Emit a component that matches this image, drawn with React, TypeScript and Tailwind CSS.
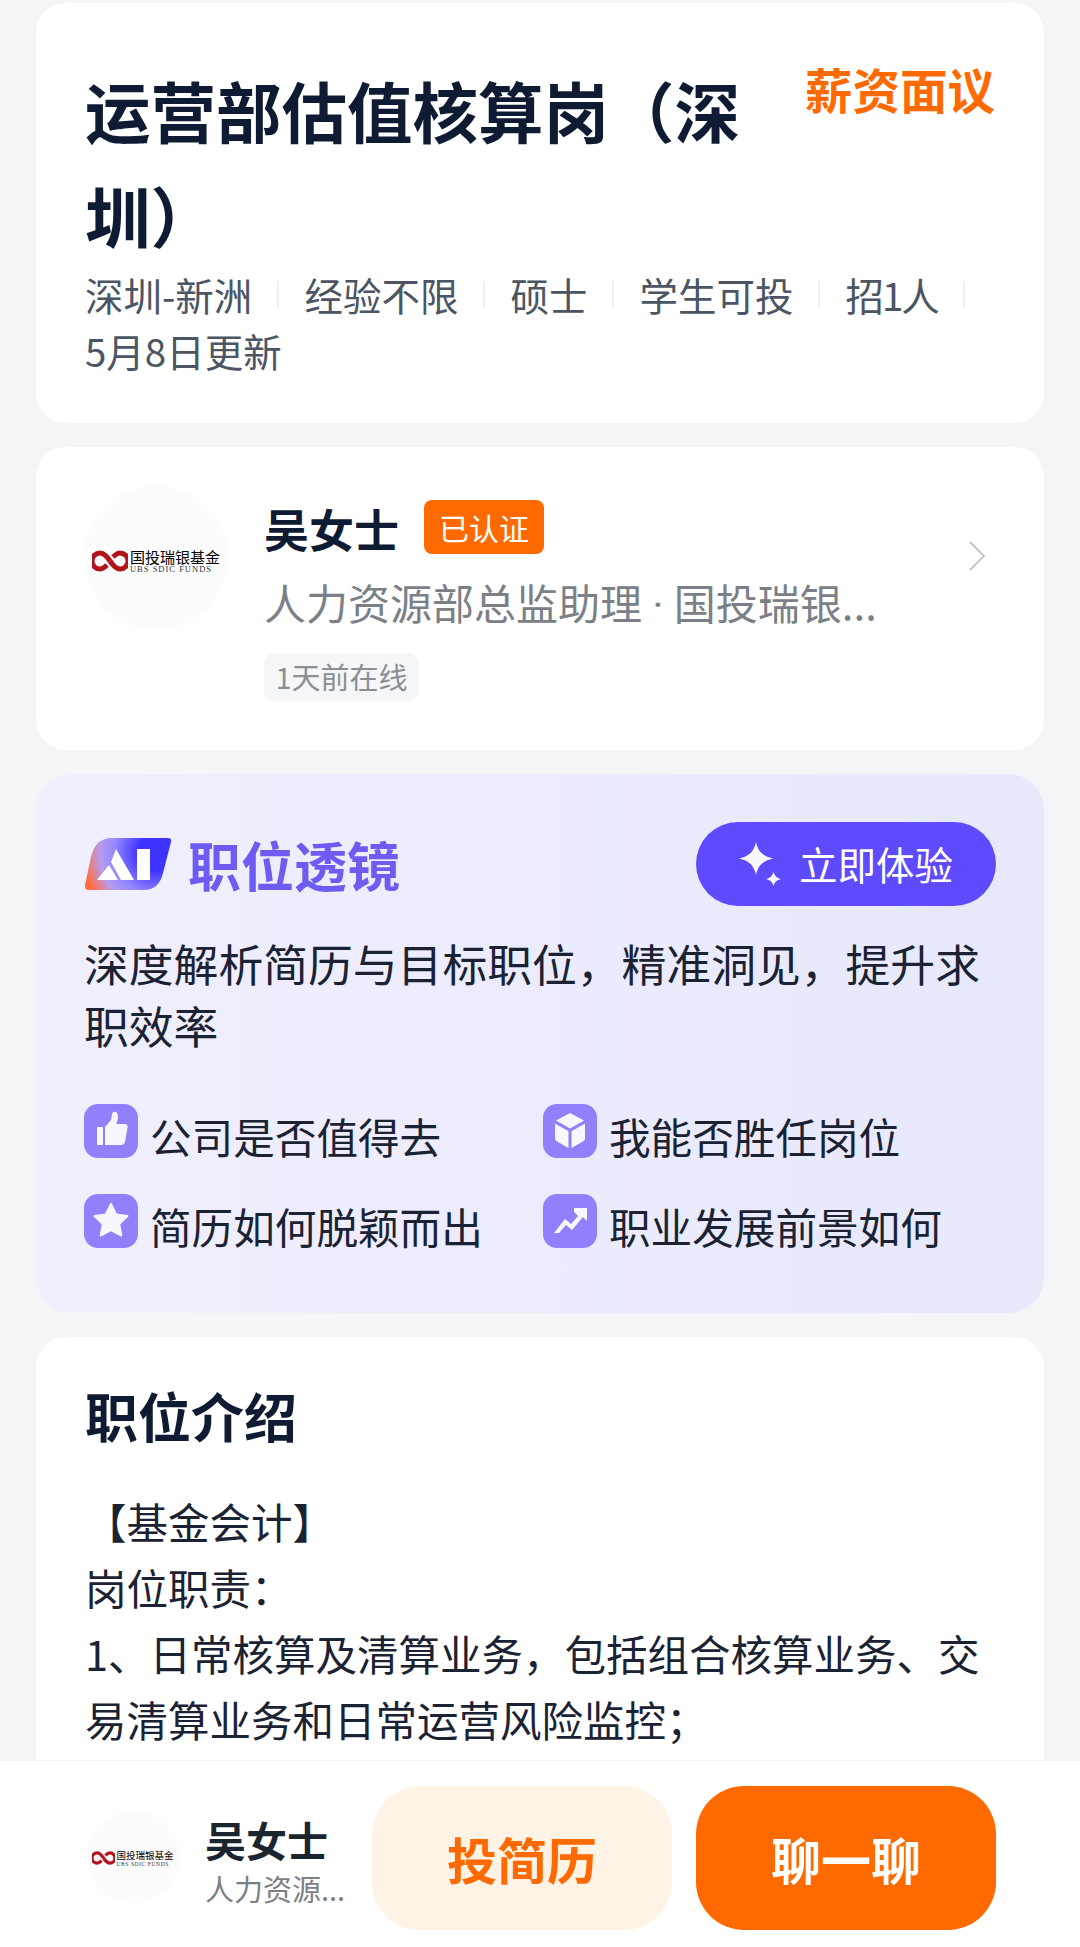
const font = { fontFamily: '"Noto Sans CJK SC", "Noto Sans", sans-serif' };

const meta = ['深圳-新洲', '经验不限', '硕士', '学生可投', '招1人'];

const Logo = ({ small }: { small?: boolean }) => (
  <div
    className={
      small
        ? 'flex h-[92px] w-[92px] shrink-0 items-center justify-center rounded-full bg-[#fcfcfc] pt-[2px]'
        : 'flex h-[144px] w-[144px] shrink-0 items-center justify-center rounded-full bg-[#fcfcfc] pt-[6px]'
    }
  >
    <div className={small ? 'flex items-center gap-[1px]' : 'flex items-center gap-[2px]'}>
      <svg
        viewBox="0 0 36 22"
        className={small ? 'h-[14px] w-[23px]' : 'h-[22px] w-[36px]'}
        fill="none"
        stroke="#b3141c"
        strokeWidth="5"
      >
        <path d="M18 11C14 5 11 3 8 3a8 8 0 0 0 0 16c3 0 5-2 7-4" />
        <path d="M18 11c4 6 7 8 10 8a8 8 0 0 0 0-16c-3 0-5 2-7 4" />
      </svg>
      <div className="flex flex-col">
        <span
          className={
            small
              ? 'text-[9.5px] leading-[11px] whitespace-nowrap text-black'
              : 'text-[15px] leading-[16px] whitespace-nowrap text-black'
          }
          style={{ fontFamily: '"Noto Sans CJK SC", serif' }}
        >
          国投瑞银基金
        </span>
        <span
          className={
            small
              ? 'text-[5.5px] leading-[6px] tracking-[0.6px] whitespace-nowrap text-[#333]'
              : 'text-[8.5px] leading-[9px] tracking-[1px] whitespace-nowrap text-[#333]'
          }
          style={{ fontFamily: '"Liberation Serif", serif' }}
        >
          UBS SDIC FUNDS
        </span>
      </div>
    </div>
  </div>
);

const IconBox = ({ children }: { children: React.ReactNode }) => (
  <div className="flex h-[54px] w-[54px] shrink-0 items-center justify-center rounded-[14px] bg-[#9180fb]">
    <svg viewBox="0 0 54 54" className="h-[54px] w-[54px]" fill="#f8f6ff">
      {children}
    </svg>
  </div>
);

const ThumbIcon = () => (
  <IconBox>
    <rect x="13" y="23" width="6" height="18" rx="1" />
    <path d="M21 23l6-7c.5-3 .8-6 2-8 3-1 5 1 5 4 0 3-1 6-1.500 8H41c2 0 3 1.500 2.600 3.500L41 38c-.4 2-1.800 3-3.500 3H21z" />
  </IconBox>
);

const BoxIcon = () => (
  <IconBox>
    <path d="M27 9l14 7.500-14 8-14-8z" />
    <path d="M12 19.500l13.500 7.700V44L14 37.500c-1.300-.7-2-1.800-2-3.200z" />
    <path d="M42 19.500l-13.500 7.700V44L40 37.500c1.300-.7 2-1.800 2-3.200z" />
  </IconBox>
);

const StarIcon = () => (
  <IconBox>
    <path d="M27 10l5.200 10.400 11.300 1.700-8.200 8 2 11.400L27 36.200 16.700 41.500l2-11.400-8.200-8 11.300-1.700z" strokeLinejoin="round" stroke="#f8f6ff" strokeWidth="2" />
  </IconBox>
);

const TrendIcon = () => (
  <IconBox>
    <path d="M31 14h13v13l-4-4-11 13-6-5-7 8h-5l11-14 6 5 7-8-4-4z" />
  </IconBox>
);

const Feature = ({ icon, text }: { icon: React.ReactNode; text: string }) => (
  <div className="flex h-[54px] items-center gap-[12px]">
    {icon}
    <span className="mt-[9px] text-[41.6px] leading-[54px] whitespace-nowrap text-[#1a2233]">{text}</span>
  </div>
);

export default function App() {
  return (
    <div className="flex h-[1947px] w-[1080px] flex-col overflow-hidden bg-[#f3f5f7]" style={font}>
      <div className="flex min-h-0 flex-1 flex-col gap-[24px] overflow-hidden px-[36px] pt-[3px]">
        {/* job header */}
        <div className="shrink-0 rounded-[30px] bg-white px-[49px] pt-[54px] pb-[45px]">
          <div className="flex items-start justify-between">
            <h1 className="w-[680px] text-[65.5px] leading-[105px] font-bold text-[#0f1b33]">
              运营部估值核算岗（深圳）
            </h1>
            <span className="mt-[-1px] text-[47.500px] leading-[66px] font-bold whitespace-nowrap text-[#ff6a00]">
              薪资面议
            </span>
          </div>
          <div className="mt-[-1px] mr-[-30px] flex flex-wrap items-center text-[38.5px] leading-[56px] text-[#4b5563]">
            {meta.map((m) => (
              <div key={m} className="flex items-center">
                <span className={m === '招1人' ? 'tracking-[-2px]' : ''}>{m}</span>
                <span className="mx-[25px] h-[26px] w-[2px] bg-[#eceef0]" />
              </div>
            ))}
            <span className="w-full">5月8日更新</span>
          </div>
        </div>

        {/* recruiter */}
        <div className="flex h-[303px] shrink-0 items-start rounded-[30px] bg-white pt-[39px] pl-[48px]">
          <Logo />
          <div className="ml-[36px] flex min-w-0 flex-1 flex-col items-start">
            <div className="mt-[14px] flex items-start gap-[25px]">
              <span className="mt-[2px] text-[45px] leading-[54px] font-bold text-[#0f1b33]">吴女士</span>
              <span className="flex h-[54px] w-[120px] items-center justify-center rounded-[8px] bg-[#ff6a00] text-[30px] text-white">
                已认证
              </span>
            </div>
            <span className="mt-[18px] text-[42px] leading-[56px] whitespace-nowrap text-[#7b8087]">
              人力资源部总监助理<span style={{ fontFamily: 'Roboto, sans-serif' }}> · </span>国投瑞银...
            </span>
            <span className="mt-[19px] flex h-[48px] w-[155px] items-center justify-center rounded-[10px] bg-[#f5f6f7] text-[29px] whitespace-nowrap text-[#8a8f96]">
              1天前在线
            </span>
          </div>
          <svg viewBox="0 0 18 32" className="mt-[54px] mr-[58px] h-[32px] w-[18px]" fill="none" stroke="#c4c7cb" strokeWidth="2">
            <path d="M2 2l14 14L2 30" />
          </svg>
        </div>

        {/* AI lens */}
        <div className="h-[539px] shrink-0 rounded-[36px] bg-gradient-to-r from-[#f0effd] to-[#e6e8fc] px-[48px] pt-[48px]">
          <div className="flex items-center justify-between">
            <div className="flex items-center gap-[16px]">
              <svg viewBox="0 0 88 54" className="h-[54px] w-[88px]">
                <defs>
                  <radialGradient id="aiBg" gradientUnits="userSpaceOnUse" cx="72" cy="16" r="82">
                    <stop offset="0.22" stopColor="#3f34ff" />
                    <stop offset="0.5" stopColor="#9385ff" />
                    <stop offset="0.68" stopColor="#b49cf0" />
                    <stop offset="0.88" stopColor="#ff7048" />
                    <stop offset="1" stopColor="#ff6a40" />
                  </radialGradient>
                </defs>
                <path d="M14 6Q20 1 27 1H84Q88 1 87 5L79 36Q75 53 60 53H5Q0 53 1 48L7 20Q9 11 14 6Z" fill="url(#aiBg)" />
                <path d="M32 12L50 43H37L27 25Z" fill="#fff" />
                <path d="M13 43L25 28L34 43Z" fill="#fff" />
                <rect x="53" y="12" width="13" height="31" fill="#fff" />
              </svg>
              <span className="text-[53px] leading-[66px] font-bold whitespace-nowrap text-[#6c5cf2]">职位透镜</span>
            </div>
            <div className="flex h-[84px] w-[300px] items-center justify-center gap-[18px] rounded-full bg-[#5f4bff]">
              <svg viewBox="0 0 42 44" className="h-[44px] w-[42px]" fill="#f8f6ff">
                <path d="M17 0c2 9 6 14 17 16.500C23 19 19 24 17 33c-2-9-6-14-17-16.500C11 14 15 9 17 0z" />
                <path d="M34.500 29.500c1 4 3 6.500 7.500 7.500-4.500 1-6.500 3.500-7.500 7-1-3.500-3-6-7.500-7 4.500-1 6.500-3.500 7.500-7.500z" />
              </svg>
              <span className="text-[38.5px] whitespace-nowrap text-white">立即体验</span>
            </div>
          </div>
          <p className="mt-[26px] text-[44.8px] leading-[62px] text-[#1a2233]">
            深度解析简历与目标职位，精准洞见，提升求职效率
          </p>
          <div className="mt-[48px] grid grid-cols-[459px_1fr] gap-y-[36px]">
            <Feature icon={<ThumbIcon />} text="公司是否值得去" />
            <Feature icon={<BoxIcon />} text="我能否胜任岗位" />
            <Feature icon={<StarIcon />} text="简历如何脱颖而出" />
            <Feature icon={<TrendIcon />} text="职业发展前景如何" />
          </div>
        </div>

        {/* description */}
        <div className="flex-1 rounded-t-[30px] bg-white px-[49px] pt-[45px]">
          <h2 className="text-[53px] leading-[66px] font-bold text-[#0f1b33]">职位介绍</h2>
          <div className="mt-[40px] text-[41.5px] leading-[66px] text-[#1a2233]">
            <p>【基金会计】</p>
            <p>岗位职责：</p>
            <p>1、日常核算及清算业务，包括组合核算业务、交易清算业务和日常运营风险监控；</p>
          </div>
        </div>
      </div>

      {/* bottom bar */}
      <div className="flex h-[187px] shrink-0 items-start border-t border-[#f0f1f3] bg-white pr-[84px] pl-[87px]">
        <div className="mt-[50px]">
          <Logo small />
        </div>
        <div className="mt-[51px] ml-[26px] flex w-[167px] shrink-0 flex-col">
          <span className="text-[41px] leading-[54px] font-bold text-[#1a2530]">吴女士</span>
          <span className="text-[29px] leading-[44px] text-[#7b8087]">人力资源...</span>
        </div>
        <button className="mt-[25px] flex h-[144px] w-[300px] shrink-0 items-center justify-center rounded-[48px] bg-[#fff3e6] text-[50px] font-bold text-[#ff6a00]">
          投简历
        </button>
        <button className="mt-[25px] ml-[24px] flex h-[144px] w-[300px] shrink-0 items-center justify-center rounded-[48px] bg-[#ff6a00] text-[50px] font-bold text-white">
          聊一聊
        </button>
      </div>
    </div>
  );
}
